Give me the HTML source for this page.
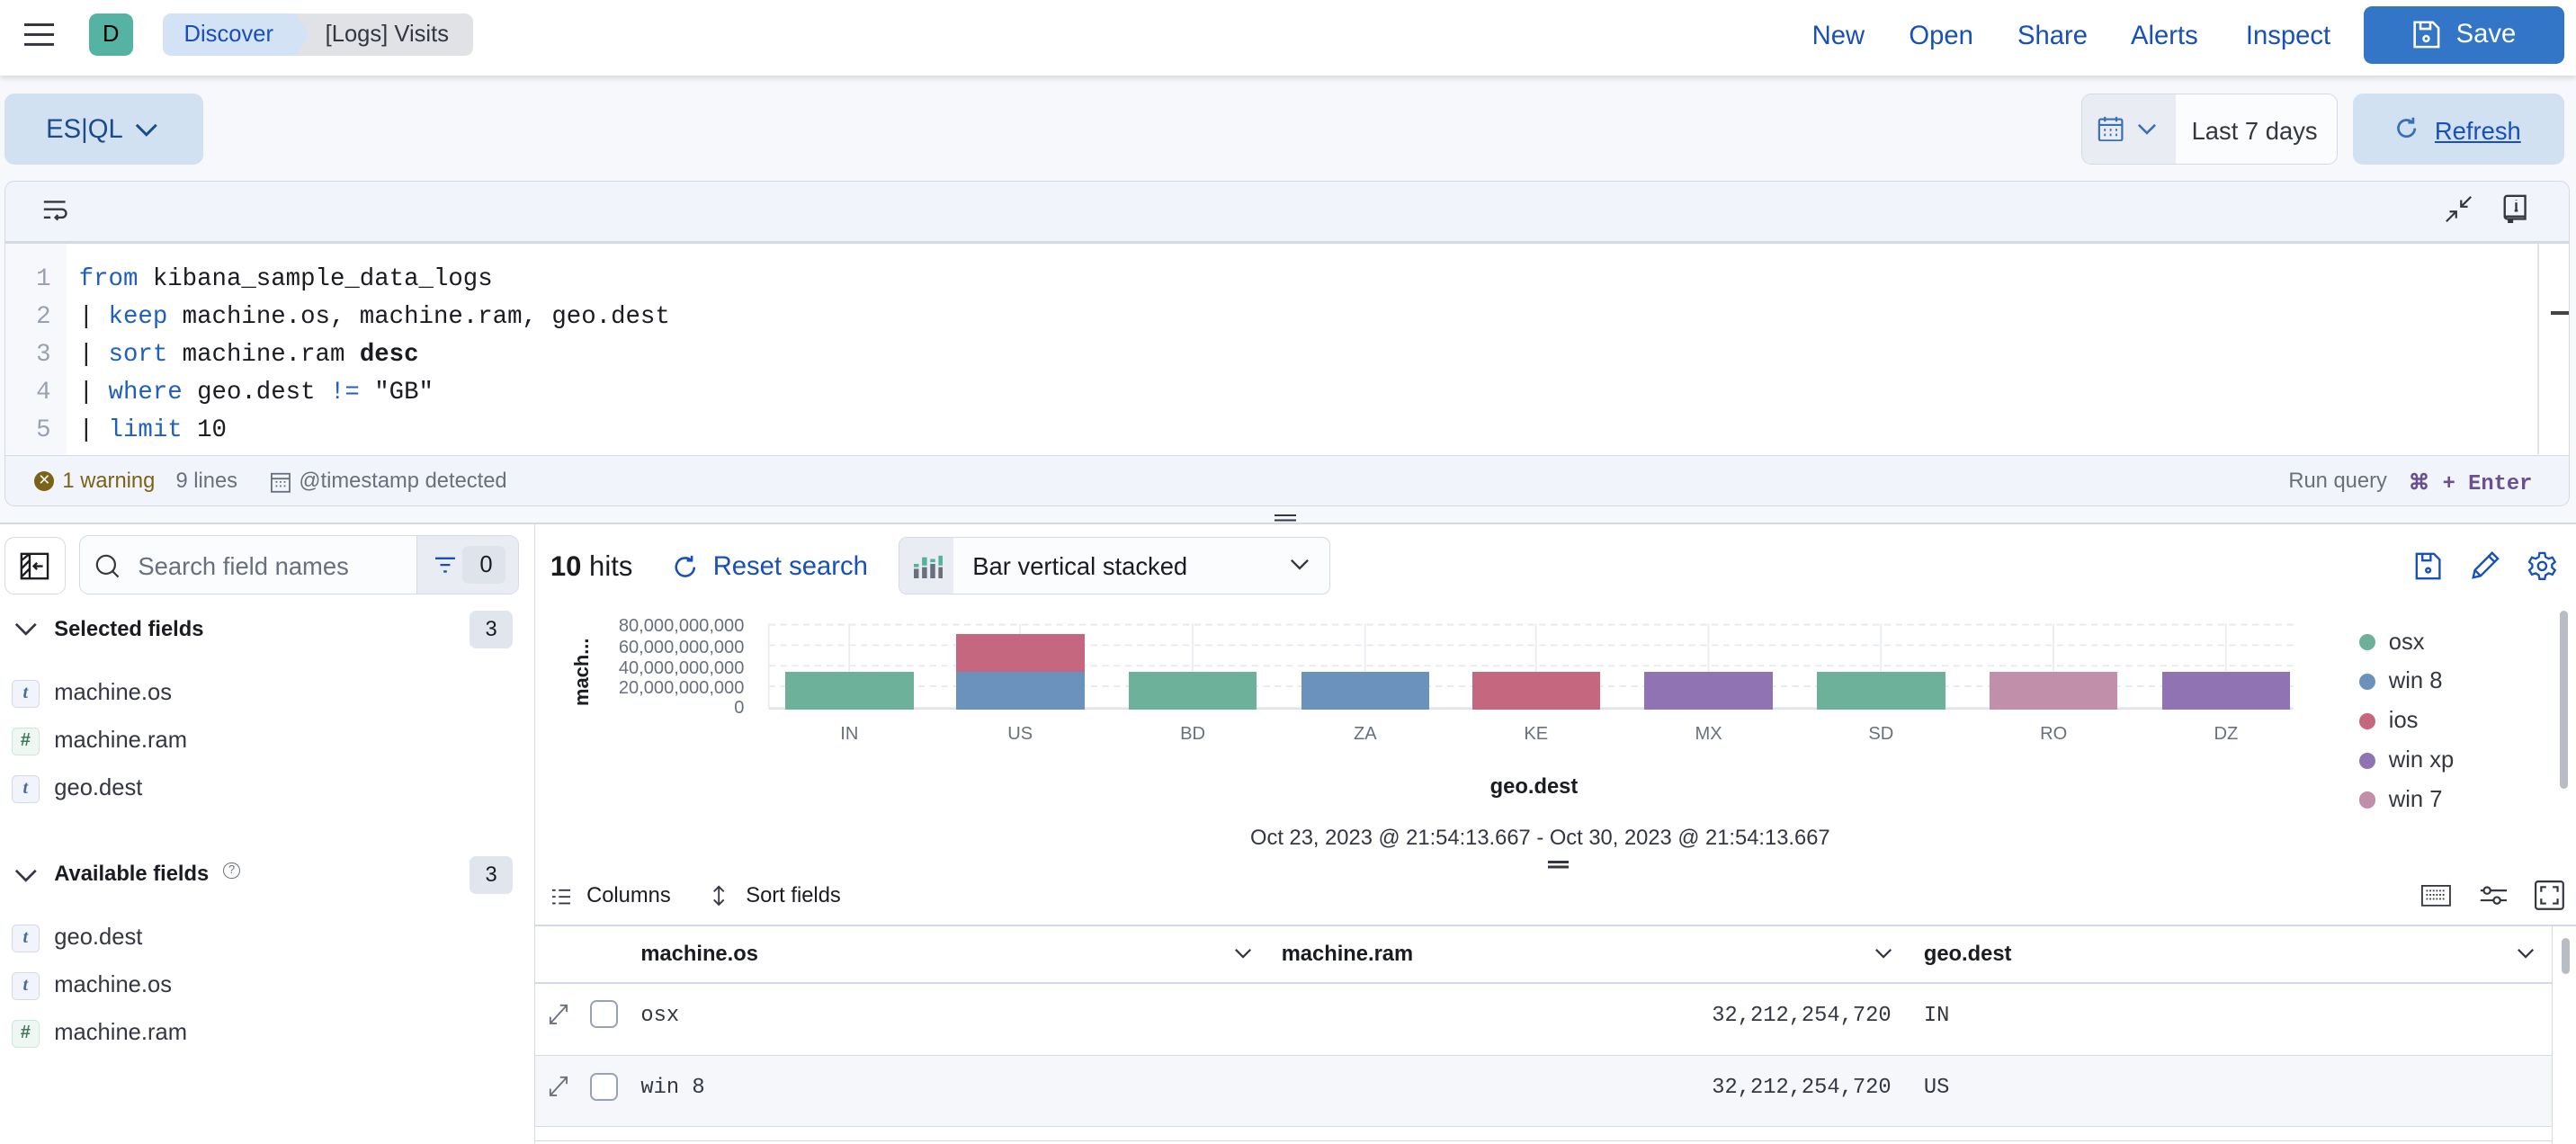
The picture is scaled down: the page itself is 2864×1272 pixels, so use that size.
<!DOCTYPE html>
<html><head><meta charset="utf-8">
<style>
*{box-sizing:border-box;margin:0;padding:0}
html,body{width:2864px;height:1272px;overflow:hidden;background:#fff}
#w{position:relative;width:1568px;height:697px;zoom:1.82653;font-family:"Liberation Sans",sans-serif;color:#343741;background:#fff;overflow:hidden}
.a{position:absolute}
.mono{font-family:"Liberation Mono",monospace}
.blue{color:#1750ba}
.t{position:absolute;white-space:nowrap}
.ft{position:absolute;left:7px;width:17px;height:17px;border:1px solid #d3dae6;border-radius:3px;background:#f1f4fa;font:italic bold 11px "Liberation Serif",serif;color:#4a6b95;text-align:center;line-height:15px}
.ft.n{background:#eef7f2;border-color:#cfe8da;color:#3d7a5c;font-style:normal;font-family:"Liberation Sans",sans-serif}
.fl{position:absolute;left:33px;font-size:14px;color:#343741}
.bar{position:absolute;width:78px}
.xl{position:absolute;top:441px;width:40px;text-align:center;font-size:11px;color:#69707d}
.yl{position:absolute;font-size:11px;color:#69707d;text-align:right}
.dot{position:absolute;left:1436px;width:10px;height:10px;border-radius:50%}
.lg{position:absolute;left:1454px;font-size:14px;color:#343741}
</style></head><body><div id="w">

<div class="a" style="left:0;top:0;width:1568px;height:46px;background:#fff;box-shadow:0 2px 3px rgba(0,0,0,.12);z-index:2"></div>
<div class="a" style="left:0;top:46px;width:1568px;height:272px;background:#f7f8fc"></div>
<div style="z-index:3;position:absolute;left:0;top:0;width:1568px;height:46px">
 <div class="a" style="left:15px;top:14px;width:18px;height:2px;background:#343741;box-shadow:0 6px 0 #343741,0 12px 0 #343741"></div>
 <div class="a" style="left:54px;top:8px;width:27px;height:26px;border-radius:5px;background:#54b3a3;font-size:14px;text-align:center;line-height:26px;color:#000">D</div>
 <div class="a" style="left:99px;top:8px;width:90px;height:26px;background:#d3e2f4;border-radius:5px 0 0 5px;clip-path:polygon(0 0,82px 0,90px 50%,82px 100%,0 100%);font-size:14px;line-height:26px;padding-left:13px;color:#1750ba">Discover</div>
 <div class="a" style="left:180px;top:8px;width:108px;height:26px;background:#e0e2e6;border-radius:0 5px 5px 0;clip-path:polygon(0 0,100% 0,100% 100%,0 100%,8px 50%);font-size:14px;line-height:26px;padding-left:18px;color:#343741">[Logs] Visits</div>
 <div class="t blue" style="left:1103px;top:13px;font-size:16px">New</div>
 <div class="t blue" style="left:1162px;top:13px;font-size:16px">Open</div>
 <div class="t blue" style="left:1228px;top:13px;font-size:16px">Share</div>
 <div class="t blue" style="left:1297px;top:13px;font-size:16px">Alerts</div>
 <div class="t blue" style="left:1367px;top:13px;font-size:16px">Inspect</div>
 <div class="a" style="left:1439px;top:4px;width:122px;height:35px;background:#3375c7;border-radius:5px"></div>
 <svg class="a" style="left:1468px;top:12px" width="18" height="18" viewBox="0 0 18 18" fill="none" stroke="#fff" stroke-width="1.4"><path d="M2 1.5h11l3.5 3.5v11.5h-14.5z"/><path d="M5.5 1.5v4h6v-4"/><circle cx="9" cy="11.5" r="1.6"/></svg>
 <div class="t" style="left:1495px;top:12px;font-size:16px;color:#fff">Save</div>
</div>

<div class="a" style="left:3px;top:57px;width:121px;height:43px;background:#d1e1f2;border-radius:6px"></div>
<div class="t" style="left:28px;top:70px;font-size:16px;color:#1b4b8c">ES<span style="font-weight:300">|</span>QL</div>
<svg class="a" style="left:82px;top:75px" width="14" height="9" viewBox="0 0 14 9"><path d="M1 1l6 6 6-6" stroke="#1b4b8c" stroke-width="1.6" fill="none"/></svg>
<div class="a" style="left:1267px;top:57px;width:156px;height:43px;border:1px solid #d3dae6;border-radius:6px;background:#fbfcfd;overflow:hidden"><div class="a" style="left:0;top:0;width:57px;height:43px;background:#e9edf3"></div></div>
<svg class="a" style="left:1277px;top:70px" width="16" height="16" viewBox="0 0 16 16" fill="none" stroke="#3a6fb7" stroke-width="1.2"><rect x="1" y="2.5" width="14" height="13" rx="1"/><path d="M1 6h14M4.5 1v3M11.5 1v3"/><path d="M4 9h1M7.5 9h1M11 9h1M4 12h1M7.5 12h1M11 12h1" stroke-width="1.4"/></svg>
<svg class="a" style="left:1301px;top:75px" width="12" height="8" viewBox="0 0 12 8"><path d="M1 1l5 5 5-5" stroke="#3a6fb7" stroke-width="1.4" fill="none"/></svg>
<div class="t" style="left:1334px;top:71px;font-size:15px;color:#343741">Last 7 days</div>
<div class="a" style="left:1432px;top:57px;width:129px;height:43px;background:#d1e1f2;border-radius:6px"></div>
<svg class="a" style="left:1457px;top:70px" width="16" height="16" viewBox="0 0 16 16" fill="none" stroke="#3a6fb7" stroke-width="1.5"><path d="M13 8a5 5 0 1 1-2-4"/><path d="M12 1.5v3h-3"/></svg>
<div class="t" style="left:1482px;top:71px;font-size:15px;color:#1750ba;text-decoration:underline">Refresh</div>

<div class="a" style="left:3px;top:110px;width:1561px;height:198px;border:1px solid #d3dae6;border-radius:6px;background:#f1f4fa;overflow:hidden">
 <div class="a" style="left:0;top:36px;width:1561px;height:131px;background:#fff;border-top:2px solid #d3dae6;border-bottom:1px solid #d3dae6"></div>
 <div class="a" style="left:0;top:38px;width:37px;height:128px;background:#f7f8fc"></div>
 <div class="a" style="left:1541px;top:38px;width:1px;height:128px;background:#e0e4ea"></div>
 <div class="a" style="left:1549px;top:79px;width:11px;height:2px;background:#444"></div>
</div>
<svg class="a" style="left:26px;top:120px" width="16" height="16" viewBox="0 0 16 16" fill="none" stroke="#343741" stroke-width="1.3"><path d="M1 3h13M1 7.5h11a2.5 2.5 0 0 1 0 5H8M1 12.5h4"/><path d="M9.5 11l-1.5 1.5 1.5 1.5"/></svg>
<svg class="a" style="left:1488px;top:119px" width="17" height="17" viewBox="0 0 17 17" fill="none" stroke="#343741" stroke-width="1.2"><path d="M16 1l-6 6M10 3v4h4M1 16l6-6M3 10h4v4"/></svg>
<svg class="a" style="left:1523px;top:118px" width="16" height="18" viewBox="0 0 16 18" fill="none" stroke="#343741" stroke-width="1.3"><path d="M3 1h11v14H3a1.5 1.5 0 0 1-1.5-1.5V2.5A1.5 1.5 0 0 1 3 1z"/><path d="M1.5 14.5a1.5 1.5 0 0 1 1.5-1h11"/><path d="M8.5 5v5M7.5 10h2M8.5 3.5v.3"/><path d="M4 15v2.5l1-1 1 1V15" fill="#343741"/></svg>
<div class="a mono" style="left:14px;top:159px;font-size:15px;line-height:23px;color:#98a2b3;text-align:right;width:17px">1<br>2<br>3<br>4<br>5</div>
<div class="a mono" style="left:48px;top:159px;font-size:15px;line-height:23px;color:#1a1c21;white-space:pre"><span style="color:#1e5fbf">from</span> kibana_sample_data_logs
| <span style="color:#1e5fbf">keep</span> machine.os, machine.ram, geo.dest
| <span style="color:#1e5fbf">sort</span> machine.ram <b>desc</b>
| <span style="color:#1e5fbf">where</span> geo.dest <span style="color:#1e5fbf">!=</span> "GB"
| <span style="color:#1e5fbf">limit</span> 10</div>
<div class="a" style="left:21px;top:287px;width:12px;height:12px;border-radius:50%;background:#7b6219;color:#fff;font-size:9px;text-align:center;line-height:12px">✕</div>
<div class="t" style="left:38px;top:286px;font-size:13px;color:#7b6219">1 warning</div>
<div class="t" style="left:107px;top:286px;font-size:13px;color:#69707d">9 lines</div>
<svg class="a" style="left:165px;top:287px" width="12" height="13" viewBox="0 0 12 13" fill="none" stroke="#69707d"><rect x=".5" y="1.5" width="11" height="11"/><path d="M.5 4.5h11M3 6.5h1M5.5 6.5h1M8 6.5h1M3 9h1M5.5 9h1M8 9h1"/></svg>
<div class="t" style="left:182px;top:286px;font-size:13px;color:#69707d">@timestamp detected</div>
<div class="t" style="left:1393px;top:286px;font-size:13px;color:#69707d">Run query</div>
<div class="t mono" style="left:1466px;top:286px;font-size:13px;color:#6a4f92;font-weight:bold">⌘ + Enter</div>

<div class="a" style="left:0;top:318px;width:1568px;height:1px;background:#d3dae6"></div>
<div class="a" style="left:776px;top:313px;width:13px;height:1.5px;background:#343741;box-shadow:0 3px 0 #343741"></div>

<div class="a" style="left:325px;top:318px;width:1px;height:379px;background:#d3dae6"></div>
<div class="a" style="left:3px;top:327px;width:37px;height:35px;border:1px solid #d3dae6;border-radius:6px;background:#fff"></div>
<svg class="a" style="left:12px;top:336px" width="18" height="17" viewBox="0 0 18 17" fill="none" stroke="#1a1c21" stroke-width="1.3"><rect x="1" y="1" width="16" height="15"/><path d="M6 1v15M1 5l5-4M1 10l5-5M1 15l5-5M14 8.5H8.5M10.5 6.5l-2 2 2 2"/></svg>
<div class="a" style="left:48px;top:326px;width:268px;height:36px;border:1px solid #d3dae6;border-radius:6px;background:#fbfcfd;overflow:hidden"><div class="a" style="left:205px;top:0;width:63px;height:36px;background:#e9edf3;border-left:1px solid #d3dae6"></div><div class="a" style="left:233px;top:6px;width:26px;height:23px;background:#dfe4ec;border-radius:4px"></div></div>
<svg class="a" style="left:58px;top:337px" width="15" height="15" viewBox="0 0 15 15" fill="none" stroke="#343741" stroke-width="1.2"><circle cx="6.5" cy="6.5" r="5.5"/><path d="M10.5 10.5l3.5 3.5"/></svg>
<div class="t" style="left:84px;top:336px;font-size:15px;color:#69707d">Search field names</div>
<svg class="a" style="left:265px;top:339px" width="12" height="10" viewBox="0 0 12 10" stroke="#1750ba" stroke-width="1.3"><path d="M0 1h12M3 5h6M5 9h2"/></svg>
<div class="t" style="left:292px;top:336px;font-size:14px;color:#1a1c21">0</div>

<svg class="a" style="left:9px;top:379px" width="14" height="9" viewBox="0 0 14 9"><path d="M1 1l6 6 6-6" stroke="#343741" stroke-width="1.5" fill="none"/></svg>
<div class="t" style="left:33px;top:376px;font-size:13px;font-weight:bold;color:#1a1c21">Selected fields</div>
<div class="a" style="left:286px;top:372px;width:26px;height:23px;background:#e0e5ee;border-radius:4px;text-align:center;line-height:23px;font-size:13px;color:#1a1c21">3</div>
<div class="ft" style="top:414px">t</div><div class="fl" style="top:414px">machine.os</div>
<div class="ft n" style="top:443px">#</div><div class="fl" style="top:443px">machine.ram</div>
<div class="ft" style="top:472px">t</div><div class="fl" style="top:472px">geo.dest</div>

<svg class="a" style="left:9px;top:529px" width="14" height="9" viewBox="0 0 14 9"><path d="M1 1l6 6 6-6" stroke="#343741" stroke-width="1.5" fill="none"/></svg>
<div class="t" style="left:33px;top:525px;font-size:13px;font-weight:bold;color:#1a1c21">Available fields</div>
<div class="a" style="left:136px;top:525px;width:10px;height:10px;border:1px solid #69707d;border-radius:50%;font-size:7px;text-align:center;line-height:8px;color:#69707d">?</div>
<div class="a" style="left:286px;top:521px;width:26px;height:23px;background:#e0e5ee;border-radius:4px;text-align:center;line-height:23px;font-size:13px;color:#1a1c21">3</div>
<div class="ft" style="top:563px">t</div><div class="fl" style="top:563px">geo.dest</div>
<div class="ft" style="top:592px">t</div><div class="fl" style="top:592px">machine.os</div>
<div class="ft n" style="top:621px">#</div><div class="fl" style="top:621px">machine.ram</div>

<div class="t" style="left:335px;top:335px;font-size:17px;color:#1a1c21"><b>10</b> hits</div>
<svg class="a" style="left:410px;top:337px" width="15" height="16" viewBox="0 0 15 16" fill="none" stroke="#1750ba" stroke-width="1.4"><path d="M12.5 8a5.5 5.5 0 1 1-2-4.3"/><path d="M11 1v3h-3"/></svg>
<div class="t blue" style="left:434px;top:336px;font-size:16px">Reset search</div>
<div class="a" style="left:547px;top:327px;width:263px;height:35px;border:1px solid #d3dae6;border-radius:5px;background:#fbfcfd;overflow:hidden"><div class="a" style="left:0;top:0;width:33px;height:35px;background:#e9edf3"></div></div>
<svg class="a" style="left:556px;top:337px" width="18" height="15" viewBox="0 0 18 15"><g fill="#69707d"><rect x="0" y="9" width="3" height="6"/><rect x="5" y="8" width="3" height="7"/><rect x="10" y="6" width="3" height="9"/><rect x="15" y="8" width="3" height="7"/></g><g fill="#54b399"><rect x="0" y="6" width="3" height="2"/><rect x="5" y="2" width="3" height="5"/><rect x="10" y="3" width="3" height="2"/><rect x="15" y="1" width="3" height="6"/></g></svg>
<div class="t" style="left:592px;top:336px;font-size:15px;color:#1a1c21">Bar vertical stacked</div>
<svg class="a" style="left:785px;top:340px" width="12" height="8" viewBox="0 0 12 8"><path d="M1 1l5 5 5-5" stroke="#343741" stroke-width="1.3" fill="none"/></svg>
<svg class="a" style="left:1470px;top:336px" width="16" height="17" viewBox="0 0 16 17" fill="none" stroke="#1750ba" stroke-width="1.3"><path d="M1 1h10.5l3.5 3.5V16H1z"/><path d="M4.5 1v4h5V1"/><circle cx="8" cy="11" r="1.3"/></svg>
<svg class="a" style="left:1504px;top:335px" width="18" height="18" viewBox="0 0 18 18" fill="none" stroke="#1750ba" stroke-width="1.3"><path d="M13 1.5l3.5 3.5L6 15.5 1.5 16.5 2.5 12z"/><path d="M11 3.5l3.5 3.5M2.5 12l3.5 3.5"/></svg>
<svg class="a" style="left:1538px;top:335px" width="19" height="19" viewBox="0 0 24 24" fill="none" stroke="#1750ba" stroke-width="1.6"><path d="M10 2h4l.6 3 2.4 1.4 2.9-1 2 3.4-2.3 2v2.4l2.3 2-2 3.4-2.9-1L14.6 19l-.6 3h-4l-.6-3L7 17.6l-2.9 1-2-3.4 2.3-2v-2.4l-2.3-2 2-3.4 2.9 1L9.4 5z"/><circle cx="12" cy="12" r="3.2"/></svg>

<div class="a" style="left:347px;top:430px;transform:rotate(-90deg);transform-origin:0 0;font-size:12px;font-weight:bold;color:#1a1c21">mach...</div>
<div class="yl" style="top:375px;left:362px;width:91px">80,000,000,000</div>
<div class="yl" style="top:388px;left:362px;width:91px">60,000,000,000</div>
<div class="yl" style="top:401px;left:362px;width:91px">40,000,000,000</div>
<div class="yl" style="top:413px;left:362px;width:91px">20,000,000,000</div>
<div class="yl" style="top:425px;left:362px;width:91px">0</div>
<svg class="a" style="left:466px;top:378px" width="930" height="56" viewBox="0 0 930 56">
<g stroke="#e6e9f0" stroke-dasharray="4 3"><path d="M2 2.5H930M2 15H930M2 27.5H930M2 40H930"/></g>
<g stroke="#e9ecf1"><path d="M2 2v51M51 2v51M155 2v51M260 2v51M365 2v51M469 2v51M574 2v51M679 2v51M784 2v51M889 2v51"/></g>
<path d="M2 53.5H930" stroke="#e0e3e8" stroke-width="1.5"/>
</svg>
<div class="bar" style="left:478px;top:409px;height:23px;background:#6db19a"></div>
<div class="bar" style="left:582px;top:386px;height:23px;background:#c4677f"></div>
<div class="bar" style="left:582px;top:409px;height:23px;background:#6b92bd"></div>
<div class="bar" style="left:687px;top:409px;height:23px;background:#6db19a"></div>
<div class="bar" style="left:792px;top:409px;height:23px;background:#6b92bd"></div>
<div class="bar" style="left:896px;top:409px;height:23px;background:#c4677f"></div>
<div class="bar" style="left:1001px;top:409px;height:23px;background:#8f73b2"></div>
<div class="bar" style="left:1106px;top:409px;height:23px;background:#6db19a"></div>
<div class="bar" style="left:1211px;top:409px;height:23px;background:#c28fab"></div>
<div class="bar" style="left:1316px;top:409px;height:23px;background:#8f73b2"></div>
<div class="xl" style="left:497px">IN</div><div class="xl" style="left:601px">US</div><div class="xl" style="left:706px">BD</div><div class="xl" style="left:811px">ZA</div><div class="xl" style="left:915px">KE</div><div class="xl" style="left:1020px">MX</div><div class="xl" style="left:1125px">SD</div><div class="xl" style="left:1230px">RO</div><div class="xl" style="left:1335px">DZ</div>
<div class="t" style="left:907px;top:472px;font-size:13px;font-weight:bold;color:#1a1c21">geo.dest</div>
<div class="dot" style="top:386px;background:#6db19a"></div><div class="lg" style="top:383px">osx</div>
<div class="dot" style="top:410px;background:#6b92bd"></div><div class="lg" style="top:407px">win 8</div>
<div class="dot" style="top:434px;background:#c4677f"></div><div class="lg" style="top:431px">ios</div>
<div class="dot" style="top:458px;background:#8f73b2"></div><div class="lg" style="top:455px">win xp</div>
<div class="dot" style="top:482px;background:#c28fab"></div><div class="lg" style="top:479px">win 7</div>
<div class="a" style="left:1558px;top:372px;width:5px;height:108px;border-radius:3px;background:#b8bcc4"></div>
<div class="t" style="left:761px;top:503px;font-size:13px;color:#343741">Oct 23, 2023 @ 21:54:13.667 - Oct 30, 2023 @ 21:54:13.667</div>
<div class="a" style="left:942px;top:524px;width:13px;height:1.5px;background:#343741;box-shadow:0 3px 0 #343741"></div>

<svg class="a" style="left:336px;top:541px" width="11" height="10" viewBox="0 0 11 10" stroke="#343741"><path d="M0 1h2M4 1h7M0 5h2M4 5h7M0 9h2M4 9h7"/></svg>
<div class="t" style="left:357px;top:538px;font-size:13px;color:#1a1c21">Columns</div>
<svg class="a" style="left:433px;top:539px" width="9" height="13" viewBox="0 0 9 13" fill="none" stroke="#343741"><path d="M4.5 1v11M1.5 4l3-3 3 3M1.5 9l3 3 3-3"/></svg>
<div class="t" style="left:454px;top:538px;font-size:13px;color:#1a1c21">Sort fields</div>
<svg class="a" style="left:1474px;top:539px" width="18" height="13" viewBox="0 0 18 13" fill="none" stroke="#343741"><rect x=".5" y=".5" width="17" height="12"/><path d="M3 3.5h12M3 6h12M3 8.5h12" stroke-dasharray="1 1"/></svg>
<svg class="a" style="left:1509px;top:537px" width="17" height="16" viewBox="0 0 17 16" fill="none" stroke="#343741" stroke-width="1.2"><path d="M1 5h16M1 11h16"/><circle cx="5" cy="5" r="2" fill="#fff"/><circle cx="11" cy="11" r="2" fill="#fff"/></svg>
<svg class="a" style="left:1543px;top:536px" width="18" height="18" viewBox="0 0 18 18" fill="none" stroke="#343741" stroke-width="1.2"><rect x=".6" y=".6" width="16.8" height="16.8" rx="1.5"/><path d="M4 7V4h3M11 4h3v3M14 11v3h-3M7 14H4v-3"/></svg>

<div class="a" style="left:326px;top:563px;width:1242px;height:1px;background:#d3dae6"></div>
<div class="a" style="left:326px;top:598px;width:1227px;height:1px;background:#d3dae6"></div>
<div class="a" style="left:326px;top:642px;width:1227px;height:44px;background:#f5f7fa;border-top:1px solid #d3dae6;border-bottom:1px solid #d3dae6"></div>
<div class="a" style="left:326px;top:694px;width:1227px;height:1px;background:#d3dae6"></div>
<div class="a" style="left:1553px;top:563px;width:1px;height:134px;background:#d3dae6"></div>
<div class="a" style="left:1559px;top:571px;width:5px;height:22px;border-radius:3px;background:#b8bcc4"></div>
<div class="t" style="left:390px;top:574px;font-size:13px;font-weight:bold;color:#1a1c21">machine.os</div>
<div class="t" style="left:780px;top:574px;font-size:13px;font-weight:bold;color:#1a1c21">machine.ram</div>
<div class="t" style="left:1171px;top:574px;font-size:13px;font-weight:bold;color:#1a1c21">geo.dest</div>
<svg class="a" style="left:751px;top:577px" width="11" height="7" viewBox="0 0 11 7"><path d="M1 1l4.5 4.5L10 1" stroke="#343741" fill="none" stroke-width="1.2"/></svg>
<svg class="a" style="left:1141px;top:577px" width="11" height="7" viewBox="0 0 11 7"><path d="M1 1l4.5 4.5L10 1" stroke="#343741" fill="none" stroke-width="1.2"/></svg>
<svg class="a" style="left:1532px;top:577px" width="11" height="7" viewBox="0 0 11 7"><path d="M1 1l4.5 4.5L10 1" stroke="#343741" fill="none" stroke-width="1.2"/></svg>

<svg class="a" style="left:334px;top:611px" width="12" height="13" viewBox="0 0 12 13" fill="none" stroke="#69707d"><path d="M1 12L11 1M7 1h4v4M1 8v4h4"/></svg>
<div class="a" style="left:359px;top:609px;width:17px;height:17px;border:1.5px solid #98a2b3;border-radius:4px;background:#fff"></div>
<div class="t mono" style="left:390px;top:611px;font-size:13px;color:#343741">osx</div>
<div class="t mono" style="left:1042px;top:611px;font-size:13px;color:#343741">32,212,254,720</div>
<div class="t mono" style="left:1171px;top:611px;font-size:13px;color:#343741">IN</div>
<svg class="a" style="left:334px;top:655px" width="12" height="13" viewBox="0 0 12 13" fill="none" stroke="#69707d"><path d="M1 12L11 1M7 1h4v4M1 8v4h4"/></svg>
<div class="a" style="left:359px;top:653px;width:17px;height:17px;border:1.5px solid #98a2b3;border-radius:4px;background:#fff"></div>
<div class="t mono" style="left:390px;top:655px;font-size:13px;color:#343741">win 8</div>
<div class="t mono" style="left:1042px;top:655px;font-size:13px;color:#343741">32,212,254,720</div>
<div class="t mono" style="left:1171px;top:655px;font-size:13px;color:#343741">US</div>

</div></body></html>
